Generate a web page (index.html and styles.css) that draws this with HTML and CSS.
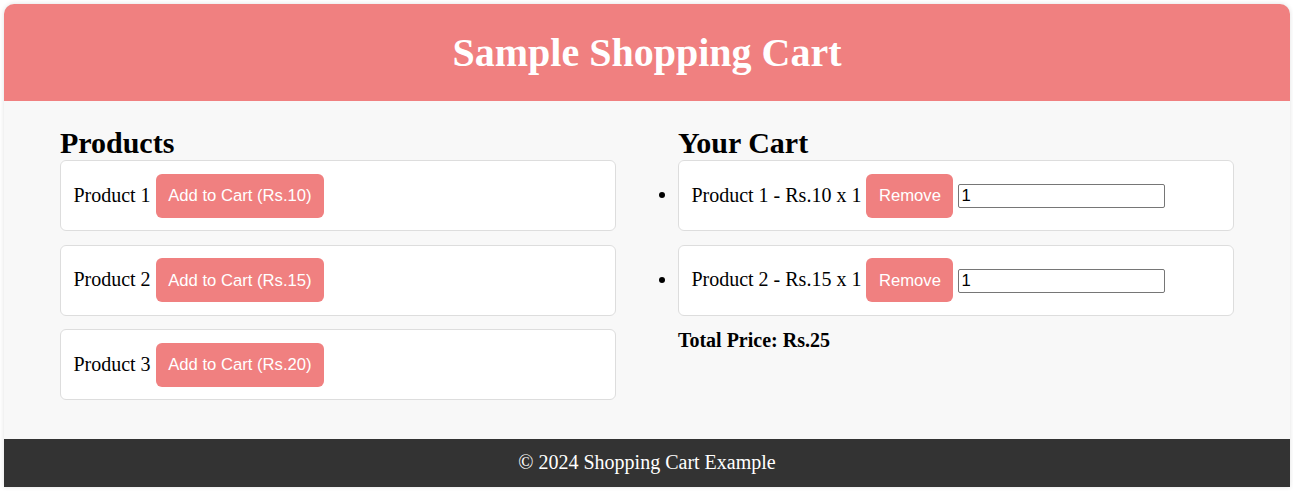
FILE: index.html
```html
<!DOCTYPE html>
<html lang="en">
<head>
<meta charset="UTF-8">
<title>Sample Shopping Cart</title>
<link rel="stylesheet" href="styles.css">
</head>
<body>
<div class="container">
  <header class="header">
    <h1 class="title">Sample Shopping Cart</h1>
  </header>
  <main class="main">
    <section class="column">
      <h2 class="heading">Products</h2>
      <div class="card">Product 1 <button class="btn">Add to Cart (Rs.10)</button></div>
      <div class="card">Product 2 <button class="btn">Add to Cart (Rs.15)</button></div>
      <div class="card">Product 3 <button class="btn">Add to Cart (Rs.20)</button></div>
    </section>
    <section class="column">
      <h2 class="heading">Your Cart</h2>
      <ul class="cart-list">
        <li class="card">Product 1 - Rs.10 x 1 <button class="btn">Remove</button> <input class="qty" type="number" value="1"></li>
        <li class="card">Product 2 - Rs.15 x 1 <button class="btn">Remove</button> <input class="qty" type="number" value="1"></li>
      </ul>
      <p class="total">Total Price: Rs.25</p>
    </section>
  </main>
  <footer class="footer">© 2024 Shopping Cart Example</footer>
</div>
</body>
</html>
```

FILE: styles.css
```css
html, body {
  margin: 0;
  padding: 0;
  background: #ffffff;
}

body {
  font-family: "Liberation Serif", "Times New Roman", serif;
  font-size: 20px;
  color: #000;
}

.container {
  margin: 4px 3px 4px 4px;
  background: #f8f8f8;
  border-radius: 10px 10px 0 0;
  overflow: hidden;
  box-shadow: 0 0 5px rgba(0, 0, 0, 0.12);
}

.header {
  background: #f08080;
  color: #ffffff;
  text-align: center;
  padding: 25px;
}

.title {
  margin: 0;
  font-size: 40px;
  font-weight: bold;
}

.main {
  display: flex;
  justify-content: space-around;
  padding: 25px;
}

.column {
  width: 45%;
}

.heading {
  margin: 0;
  font-size: 30px;
  font-weight: bold;
}

.card {
  background: #ffffff;
  border: 1px solid #dddddd;
  border-radius: 6px;
  padding: 12.5px 12.5px 12.75px;
  margin-bottom: 13.25px;
}

.cart-list {
  margin: 0;
  padding: 0;
  list-style: disc outside;
}

.btn {
  font-family: "Liberation Sans", Arial, sans-serif;
  font-size: 16.67px;
  line-height: 19px;
  height: 44px;
  background: #f08080;
  color: #ffffff;
  border: none;
  border-radius: 6px;
  padding: 12.5px 12.5px;
  cursor: pointer;
}

.qty {
  font-family: "Liberation Sans", Arial, sans-serif;
  font-size: 16.67px;
  width: 207px;
  height: 24px;
  box-sizing: border-box;
  border: 1px solid #767676;
  border-radius: 2px;
  padding: 1px 2px;
  background: #fff;
  appearance: textfield;
  -moz-appearance: textfield;
}

.qty::-webkit-inner-spin-button,
.qty::-webkit-outer-spin-button {
  -webkit-appearance: none;
  margin: 0;
}

.total {
  margin: 0;
  font-weight: bold;
}

.footer {
  background: #333333;
  color: #ffffff;
  text-align: center;
  padding: 12.5px;
}
```
